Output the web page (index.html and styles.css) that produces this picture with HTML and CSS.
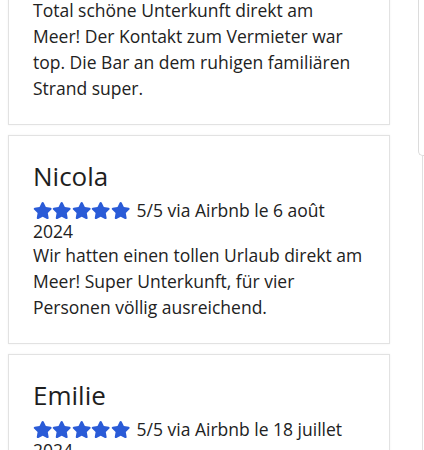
FILE: index.html
```
<!DOCTYPE html>
<html lang="de">
<head>
    <meta charset="UTF-8">
    <meta name="viewport" content="width=device-width, initial-scale=1.0">
    <title>Bewertungen</title>
    <link rel="stylesheet" href="styles.css">
</head>
<body>
    <div class="page">
        <div class="reviews">
            <div class="review">
                <h3>Thomas</h3>
                <div class="rating">
                    <span class="stars">
                        <svg viewBox="0 0 576 512"><path d="M259.3 17.8L194 150.2 47.9 171.5c-26.2 3.8-36.7 36.1-17.7 54.6l105.7 103-25 145.5c-4.5 26.3 23.2 46 46.4 33.7L288 439.6l130.7 68.7c23.2 12.2 50.9-7.4 46.4-33.7l-25-145.5 105.7-103c19-18.5 8.5-50.8-17.7-54.6L382 150.2 316.7 17.8c-11.7-23.6-45.6-23.9-57.4 0z"/></svg><svg viewBox="0 0 576 512"><path d="M259.3 17.8L194 150.2 47.9 171.5c-26.2 3.8-36.7 36.1-17.7 54.6l105.7 103-25 145.5c-4.5 26.3 23.2 46 46.4 33.7L288 439.6l130.7 68.7c23.2 12.2 50.9-7.4 46.4-33.7l-25-145.5 105.7-103c19-18.5 8.5-50.8-17.7-54.6L382 150.2 316.7 17.8c-11.7-23.6-45.6-23.9-57.4 0z"/></svg><svg viewBox="0 0 576 512"><path d="M259.3 17.8L194 150.2 47.9 171.5c-26.2 3.8-36.7 36.1-17.7 54.6l105.7 103-25 145.5c-4.5 26.3 23.2 46 46.4 33.7L288 439.6l130.7 68.7c23.2 12.2 50.9-7.4 46.4-33.7l-25-145.5 105.7-103c19-18.5 8.5-50.8-17.7-54.6L382 150.2 316.7 17.8c-11.7-23.6-45.6-23.9-57.4 0z"/></svg><svg viewBox="0 0 576 512"><path d="M259.3 17.8L194 150.2 47.9 171.5c-26.2 3.8-36.7 36.1-17.7 54.6l105.7 103-25 145.5c-4.5 26.3 23.2 46 46.4 33.7L288 439.6l130.7 68.7c23.2 12.2 50.9-7.4 46.4-33.7l-25-145.5 105.7-103c19-18.5 8.5-50.8-17.7-54.6L382 150.2 316.7 17.8c-11.7-23.6-45.6-23.9-57.4 0z"/></svg><svg viewBox="0 0 576 512"><path d="M259.3 17.8L194 150.2 47.9 171.5c-26.2 3.8-36.7 36.1-17.7 54.6l105.7 103-25 145.5c-4.5 26.3 23.2 46 46.4 33.7L288 439.6l130.7 68.7c23.2 12.2 50.9-7.4 46.4-33.7l-25-145.5 105.7-103c19-18.5 8.5-50.8-17.7-54.6L382 150.2 316.7 17.8c-11.7-23.6-45.6-23.9-57.4 0z"/></svg>
                    </span>
                    5/5 via Airbnb
                </div>
                <p>Total schöne Unterkunft direkt am Meer! Der Kontakt zum Vermieter war top. Die Bar an dem ruhigen familiären Strand super.</p>
            </div>

            <div class="review">
                <h3>Nicola</h3>
                <div class="rating">
                    <span class="stars">
                        <svg viewBox="0 0 576 512"><path d="M259.3 17.8L194 150.2 47.9 171.5c-26.2 3.8-36.7 36.1-17.7 54.6l105.7 103-25 145.5c-4.5 26.3 23.2 46 46.4 33.7L288 439.6l130.7 68.7c23.2 12.2 50.9-7.4 46.4-33.7l-25-145.5 105.7-103c19-18.5 8.5-50.8-17.7-54.6L382 150.2 316.7 17.8c-11.7-23.6-45.6-23.9-57.4 0z"/></svg><svg viewBox="0 0 576 512"><path d="M259.3 17.8L194 150.2 47.9 171.5c-26.2 3.8-36.7 36.1-17.7 54.6l105.7 103-25 145.5c-4.5 26.3 23.2 46 46.4 33.7L288 439.6l130.7 68.7c23.2 12.2 50.9-7.4 46.4-33.7l-25-145.5 105.7-103c19-18.5 8.5-50.8-17.7-54.6L382 150.2 316.7 17.8c-11.7-23.6-45.6-23.9-57.4 0z"/></svg><svg viewBox="0 0 576 512"><path d="M259.3 17.8L194 150.2 47.9 171.5c-26.2 3.8-36.7 36.1-17.7 54.6l105.7 103-25 145.5c-4.5 26.3 23.2 46 46.4 33.7L288 439.6l130.7 68.7c23.2 12.2 50.9-7.4 46.4-33.7l-25-145.5 105.7-103c19-18.5 8.5-50.8-17.7-54.6L382 150.2 316.7 17.8c-11.7-23.6-45.6-23.9-57.4 0z"/></svg><svg viewBox="0 0 576 512"><path d="M259.3 17.8L194 150.2 47.9 171.5c-26.2 3.8-36.7 36.1-17.7 54.6l105.7 103-25 145.5c-4.5 26.3 23.2 46 46.4 33.7L288 439.6l130.7 68.7c23.2 12.2 50.9-7.4 46.4-33.7l-25-145.5 105.7-103c19-18.5 8.5-50.8-17.7-54.6L382 150.2 316.7 17.8c-11.7-23.6-45.6-23.9-57.4 0z"/></svg><svg viewBox="0 0 576 512"><path d="M259.3 17.8L194 150.2 47.9 171.5c-26.2 3.8-36.7 36.1-17.7 54.6l105.7 103-25 145.5c-4.5 26.3 23.2 46 46.4 33.7L288 439.6l130.7 68.7c23.2 12.2 50.9-7.4 46.4-33.7l-25-145.5 105.7-103c19-18.5 8.5-50.8-17.7-54.6L382 150.2 316.7 17.8c-11.7-23.6-45.6-23.9-57.4 0z"/></svg>
                    </span>
                    5/5 via Airbnb le 6 août 2024
                </div>
                <p>Wir hatten einen tollen Urlaub direkt am Meer! Super Unterkunft, für vier Personen völlig ausreichend.</p>
            </div>

            <div class="review">
                <h3>Emilie</h3>
                <div class="rating">
                    <span class="stars">
                        <svg viewBox="0 0 576 512"><path d="M259.3 17.8L194 150.2 47.9 171.5c-26.2 3.8-36.7 36.1-17.7 54.6l105.7 103-25 145.5c-4.5 26.3 23.2 46 46.4 33.7L288 439.6l130.7 68.7c23.2 12.2 50.9-7.4 46.4-33.7l-25-145.5 105.7-103c19-18.5 8.5-50.8-17.7-54.6L382 150.2 316.7 17.8c-11.7-23.6-45.6-23.9-57.4 0z"/></svg><svg viewBox="0 0 576 512"><path d="M259.3 17.8L194 150.2 47.9 171.5c-26.2 3.8-36.7 36.1-17.7 54.6l105.7 103-25 145.5c-4.5 26.3 23.2 46 46.4 33.7L288 439.6l130.7 68.7c23.2 12.2 50.9-7.4 46.4-33.7l-25-145.5 105.7-103c19-18.5 8.5-50.8-17.7-54.6L382 150.2 316.7 17.8c-11.7-23.6-45.6-23.9-57.4 0z"/></svg><svg viewBox="0 0 576 512"><path d="M259.3 17.8L194 150.2 47.9 171.5c-26.2 3.8-36.7 36.1-17.7 54.6l105.7 103-25 145.5c-4.5 26.3 23.2 46 46.4 33.7L288 439.6l130.7 68.7c23.2 12.2 50.9-7.4 46.4-33.7l-25-145.5 105.7-103c19-18.5 8.5-50.8-17.7-54.6L382 150.2 316.7 17.8c-11.7-23.6-45.6-23.9-57.4 0z"/></svg><svg viewBox="0 0 576 512"><path d="M259.3 17.8L194 150.2 47.9 171.5c-26.2 3.8-36.7 36.1-17.7 54.6l105.7 103-25 145.5c-4.5 26.3 23.2 46 46.4 33.7L288 439.6l130.7 68.7c23.2 12.2 50.9-7.4 46.4-33.7l-25-145.5 105.7-103c19-18.5 8.5-50.8-17.7-54.6L382 150.2 316.7 17.8c-11.7-23.6-45.6-23.9-57.4 0z"/></svg><svg viewBox="0 0 576 512"><path d="M259.3 17.8L194 150.2 47.9 171.5c-26.2 3.8-36.7 36.1-17.7 54.6l105.7 103-25 145.5c-4.5 26.3 23.2 46 46.4 33.7L288 439.6l130.7 68.7c23.2 12.2 50.9-7.4 46.4-33.7l-25-145.5 105.7-103c19-18.5 8.5-50.8-17.7-54.6L382 150.2 316.7 17.8c-11.7-23.6-45.6-23.9-57.4 0z"/></svg>
                    </span>
                    5/5 via Airbnb le 18 juillet 2024
                </div>
                <p>Sehr schöne Lage, alles sauber und gut ausgestattet.</p>
            </div>
        </div>

        <div class="side">
            <div class="side-box"></div>
            <div class="side-line"></div>
        </div>
    </div>
</body>
</html>
```

FILE: styles.css
```
body {
    margin: 0;
    background: #fff;
    font-family: "Open Sans", "Noto Sans", sans-serif;
    color: #222;
    overflow: hidden;
}
.page {
    display: flex;
    height: 450px;
    padding-left: 8px;
    overflow: hidden;
}
.reviews {
    width: 382px;
    flex-shrink: 0;
    margin-top: -89px;
}
.review {
    border: 1px solid #e2e2e2;
    box-shadow: 0 0 2px rgba(0,0,0,0.06);
    padding: 24px 26px 23px 24px;
    margin-bottom: 10px;
    background: #fff;
}
.review h3 {
    margin: 0 0 8px 0;
    font-size: 26px;
    line-height: 32px;
    font-weight: normal;
    color: #1e1e1e;
}
.rating {
    font-size: 17.5px;
    line-height: 21px;
}
.stars {
    display: inline-flex;
    vertical-align: -2px;
    margin-right: 2px;
}
.stars svg {
    width: 19.4px;
    height: 17.2px;
    fill: #2a5bd7;
}
.review p {
    margin: 0;
    font-size: 17.5px;
    line-height: 26px;
    color: #222;
}
.side {
    margin-left: 28px;
    display: flex;
    flex-direction: column;
    flex-grow: 1;
}
.side-box {
    height: 156px;
    border: 1px solid #dcdcdc;
    border-top: none;
    border-right: none;
    border-radius: 0 0 0 5px;
    box-sizing: border-box;
}
.side-line {
    flex-grow: 1;
    margin-left: 4px;
    border-left: 1px solid #e0e0e0;
}
```
